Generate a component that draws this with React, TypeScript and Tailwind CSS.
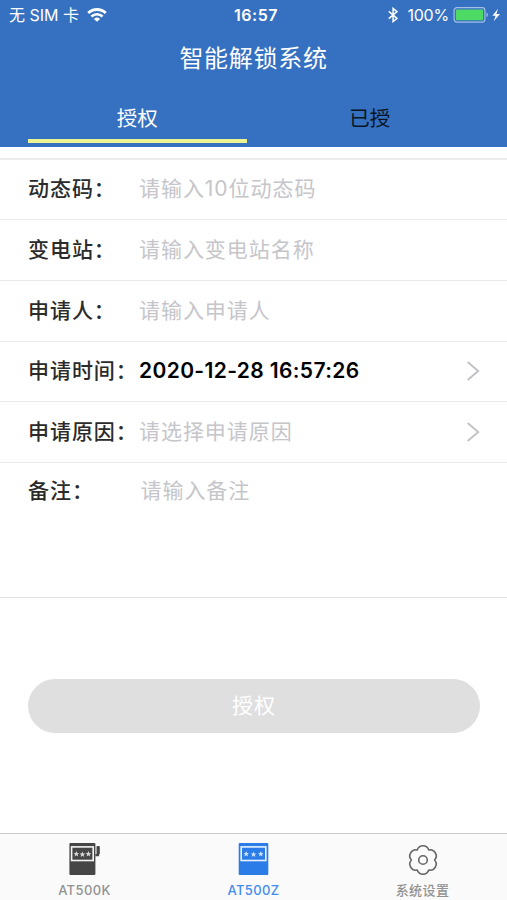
import React from "react";
import clsx from "clsx";

type RowProps = {
  label: string;
  placeholder?: string;
  value?: string;
  arrow?: boolean;
};

const WifiIcon = () => (
  <svg width="20" height="14" viewBox="0 0 20 14" fill="none" className="ml-2">
    <path d="M1.2 5.1a12.6 12.6 0 0 1 17.6 0" stroke="#fff" strokeWidth="2.8" />
    <path d="M4.4 8.5a8 8 0 0 1 11.2 0" stroke="#fff" strokeWidth="2.6" />
    <path d="M10 13.8 6.9 10.9a4.5 4.5 0 0 1 6.2 0Z" fill="#fff" />
  </svg>
);

const BluetoothIcon = () => (
  <svg width="10" height="16" viewBox="0 0 10 16" fill="none">
    <path
      d="M.8 4.4 9 11.4 5.1 14.6V1.4L9 4.6.8 11.6"
      stroke="#fff"
      strokeWidth="1.5"
    />
  </svg>
);

const BatteryIcon = () => (
  <svg width="49" height="16" viewBox="0 0 49 16" className="ml-1">
    <rect x="1.1" y=".7" width="30.8" height="14.4" rx="2.8" fill="none" stroke="#a3bfe6" strokeWidth="1.2" />
    <rect x="3" y="2.6" width="27" height="10.6" rx="1" fill="#4cd964" />
    <path d="M33.5 5.6c1.9.7 1.9 4 0 4.7Z" fill="#a3bfe6" />
    <path d="M45 1.8 39.4 8.8h3.2l-1.9 5.5L47 6.9H43.4Z" fill="#fff" />
  </svg>
);

const Chevron = () => (
  <svg width="14" height="20" viewBox="0 0 14 20" fill="none" className="mb-px mr-[27px]">
    <path d="M1.7 1 12.2 10 1.7 19" stroke="#c2c2c6" strokeWidth="1.9" />
  </svg>
);

// five pointed star used on the lock display
const star = "M0-2.9.8-.9 2.8-.9 1.3.5 1.8 2.6 0 1.4-1.8 2.6-1.3.5-2.8-.9-.8-.9Z";

const LockKIcon = () => (
  <svg width="32" height="34" viewBox="0 0 32 34">
    <rect x=".4" y="1" width="26" height="32" rx="1" fill="#464646" />
    <rect x="2.6" y="4.9" width="21.6" height="13.6" fill="none" stroke="#f4f4f4" strokeWidth="1.6" />
    <g fill="#d8d8d8">
      <path d={star} transform="translate(7.4 11.8)" />
      <path d={star} transform="translate(13.4 12.4)" />
      <path d={star} transform="translate(19.4 11.8)" />
    </g>
    <path d="M26.4 13.2h2.6V4.2" fill="none" stroke="#464646" strokeWidth="2.2" />
    <path d="M27.6 4.2h3.2v8h-3.2Z" fill="#464646" />
  </svg>
);

const LockZIcon = () => (
  <svg width="32" height="34" viewBox="0 0 32 34">
    <rect x=".7" y="1" width="29.6" height="32" rx="1" fill="#2b7ce6" />
    <rect x="3.2" y="4.9" width="24.6" height="13.6" fill="none" stroke="#e8f2ff" strokeWidth="1.6" />
    <g fill="#cce2ff">
      <path d={star} transform="translate(8.2 11.8)" />
      <path d={star} transform="translate(15.5 12.4)" />
      <path d={star} transform="translate(22.8 11.8)" />
    </g>
  </svg>
);

const SettingsIcon = () => (
  <svg width="32" height="34" viewBox="0 0 32 34" fill="none" stroke="#666" strokeWidth="1.6" strokeLinejoin="round">
    <path d="M10.2 7.95a6.1 6.1 0 0 1 11.6 0a6.1 6.1 0 0 1 5.8 10.05a6.1 6.1 0 0 1-5.8 10.05a6.1 6.1 0 0 1-11.6 0a6.1 6.1 0 0 1-5.8-10.05a6.1 6.1 0 0 1 5.8-10.05Z" />
    <circle cx="16" cy="18" r="4.3" />
  </svg>
);

const FormRow = ({ label, placeholder, value, arrow }: RowProps) => (
  <div className="flex h-[60.7px] items-center border-b-[1.5px] border-[#e9e9eb] pl-7">
    <span className="w-[111px] shrink-0 whitespace-nowrap font-medium text-[#2b2b2b]">
      {label}
    </span>
    <span
      className={clsx(
        "flex-1 whitespace-nowrap",
        value ? "font-semibold tracking-[0.37px] text-black" : "text-[#c5c5ca]"
      )}
    >
      {value || placeholder}
    </span>
    {arrow && <Chevron />}
  </div>
);

const tabs = [
  { name: "AT500K", icon: <LockKIcon />, active: false },
  { name: "AT500Z", icon: <LockZIcon />, active: true },
  { name: "系统设置", icon: <SettingsIcon />, active: false },
];

const App = () => {
  return (
    <div className="flex h-[900px] w-[507px] flex-col overflow-hidden bg-white font-['Inter','Noto_Sans_CJK_SC',sans-serif]">
      <header className="flex h-[146.5px] flex-col bg-[#3570c1] text-white">
        <div className="grid h-[30px] grid-cols-3 items-center text-[16px] leading-[30px]">
          <div className="flex items-center pl-[9px]">
            <span className="whitespace-nowrap">无 SIM 卡</span>
            <WifiIcon />
          </div>
          <span className="pl-[5px] text-center font-semibold tracking-[0.5px]">16:57</span>
          <div className="flex items-center justify-end pr-[5px]">
            <BluetoothIcon />
            <span className="ml-[9px] tracking-[-0.2px]">100%</span>
            <BatteryIcon />
          </div>
        </div>
        <h1 className="h-[55px] text-center text-[24px] leading-[57px] tracking-[0.7px]">
          智能解锁系统
        </h1>
        <div className="flex flex-1 px-7 text-[20.5px] leading-[67px]">
          <div className="flex h-[58px] w-[219px] flex-col border-b-4 border-[#edf592] text-center">
            授权
          </div>
          <div className="ml-[14px] w-[219px] text-center text-[#0b1522]">已授</div>
        </div>
      </header>

      <main className="flex flex-1 flex-col text-[21px] leading-[30px] tracking-[0.95px]">
        <div className="h-[13px] border-b-[2px] border-[#ededee]" />
        <FormRow label="动态码：" placeholder="请输入10位动态码" />
        <FormRow label="变电站：" placeholder="请输入变电站名称" />
        <FormRow label="申请人：" placeholder="请输入申请人" />
        <FormRow label="申请时间：" value="2020-12-28 16:57:26" arrow />
        <FormRow label="申请原因：" placeholder="请选择申请原因" arrow />
        <div className="flex h-[135.5px] border-b border-[#e2e2e4] pl-7 pt-[13px]">
          <span className="w-[112.5px] font-medium text-[#2b2b2b]">备注：</span>
          <span className="text-[#c5c5ca]">请输入备注</span>
        </div>
        <button className="ml-7 mr-[27px] mt-[81px] h-[54px] rounded-full bg-[#dfdfdf] text-white">
          授权
        </button>
      </main>

      <nav className="grid h-[67px] grid-cols-3 border-t-[1.5px] border-[#c9c9c9] bg-[#fafafa]">
        {tabs.map((tab) => (
          <div
            key={tab.name}
            className={clsx(
              "flex flex-col items-center pt-2 text-[13px] font-medium leading-[29px]",
              tab.active ? "text-[#3f8df0]" : "text-[#929292]"
            )}
          >
            {tab.icon}
            <span className="tracking-[0.4px]">{tab.name}</span>
          </div>
        ))}
      </nav>
    </div>
  );
};

export default App;
